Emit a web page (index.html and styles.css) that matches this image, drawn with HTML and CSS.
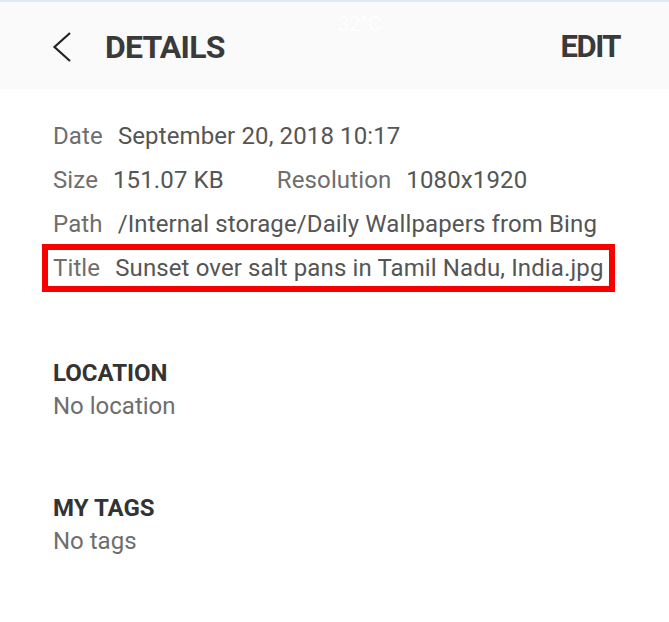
FILE: index.html
```html
<!DOCTYPE html>
<html lang="en">
<head>
  <meta charset="UTF-8">
  <meta name="viewport" content="width=device-width, initial-scale=1.0">
  <title>Details</title>
  <link rel="stylesheet" href="styles.css">
</head>
<body>
  <!-- Top bar -->
  <header class="app-bar">
    <span class="status-temp">32°C</span>
    <button class="back-button" aria-label="Back">
      <svg width="20" height="30" viewBox="0 0 20 30">
        <polyline points="18,1 2.5,15 18,29" fill="none" stroke="#222" stroke-width="2.2"/>
      </svg>
    </button>
    <h1 class="app-title">DETAILS</h1>
    <span class="edit-link">EDIT</span>
  </header>

  <main class="details">
    <div class="info">
      <div class="info-row"><span class="label">Date</span><span class="value">September 20, 2018 10:17</span></div>
      <div class="info-row">
        <span class="label">Size</span><span class="value">151.07 KB</span>
        <span class="label gap-left">Resolution</span><span class="value">1080x1920</span>
      </div>
      <div class="info-row"><span class="label">Path</span><span class="value">/Internal storage/Daily Wallpapers from Bing</span></div>
      <div class="info-row highlighted"><span class="label">Title</span><span class="value">Sunset over salt pans in Tamil Nadu, India.jpg</span></div>
    </div>

    <section class="section">
      <h2>LOCATION</h2>
      <p>No location</p>
    </section>

    <section class="section">
      <h2>MY TAGS</h2>
      <p>No tags</p>
    </section>
  </main>
</body>
</html>
```

FILE: styles.css
```css
body {
  margin: 0;
  font-family: Roboto, "Noto Sans", sans-serif;
  background: #ffffff;
  width: 669px;
  height: 622px;
  overflow: hidden;
}

.app-bar {
  position: relative;
  height: 89px;
  background: #fafafa;
  border-top: 2px solid #dde9f5; /* faint status strip */
  display: flex;
  align-items: center;
  padding: 2px 49px 0 52px;
  box-sizing: border-box;
}

.status-temp {
  position: absolute;
  top: 10px;
  left: 338px;
  color: #ffffff;
  font-size: 20px;
}

.back-button {
  background: none;
  border: none;
  padding: 0;
  margin-right: 33px;
  display: flex;
}

.app-title {
  margin: 0;
  font-size: 32px;
  font-weight: 700;
  color: #3a3a3a;
  letter-spacing: -0.8px;
  flex: 1;
}

.edit-link {
  font-size: 31px;
  font-weight: 700;
  color: #3a3a3a;
  letter-spacing: -1.5px;
}

.details {
  padding: 25px 0 0 42px;
}

.info {
  display: flex;
  flex-direction: column;
}

.info-row {
  font-size: 24px;
  line-height: 44px;
  letter-spacing: 0.12px;
  padding: 0 0 0 11px;
  display: flex;
  align-self: flex-start;
}

.info-row .label {
  color: #6e6e6e;
  margin-right: 15px;
}

.info-row .value {
  color: #555555;
}

.info-row .gap-left {
  margin-left: 53px;
}

.info-row.highlighted {
  border: 6px solid #f60000;
  line-height: 36px;
  margin-top: -2px;
  padding: 0 5px 0 5px;
}

.section {
  margin-top: 65px;
  padding-left: 11px;
}

.section + .section {
  margin-top: 70px;
}

.section h2 {
  margin: 0;
  font-size: 24px;
  font-weight: 700;
  color: #333333;
  line-height: 32px;
}

.section p {
  margin: 1px 0 0;
  font-size: 24px;
  color: #6e6e6e;
  line-height: 32px;
}
```
